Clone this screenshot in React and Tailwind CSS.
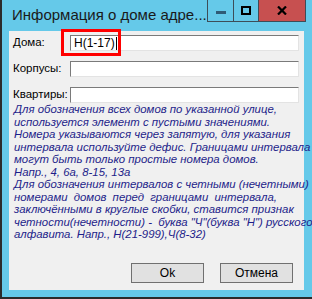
import React from 'react';

const hintLines = [
  { t: 'Для обозначения всех домов по указанной улице,' },
  { t: 'используется элемент с пустыми значениями.' },
  { t: 'Номера указываются через запятую, для указания' },
  { t: 'интервала используйте дефис. Границами интервала', full: true },
  { t: 'могут быть только простые номера домов.' },
  { t: 'Напр., 4, 6а, 8-15, 13а' },
  { t: 'Для обозначения интервалов с четными (нечетными)' },
  { t: 'номерами домов перед границами интервала,', wide: true },
  { t: 'заключёнными в круглые скобки, ставится признак' },
  { t: 'четности(нечетности) -  буква "Ч"(буква "Н") русского' },
  { t: 'алфавита. Напр., Н(21-999),Ч(8-32)' },
];

const Field = ({ label, value, caret }) => (
  <div className="flex items-center h-[16px]">
    <span className="w-[61px] pl-[4px] text-[11.5px] leading-none text-black whitespace-nowrap">{label}</span>
    <div className="w-[229px] h-[16px] bg-white border border-[#7a7a7a] border-b-[#e3e3e3] border-r-[#e3e3e3] flex items-center pl-[3px] text-[12px] text-black">
      {value}
      {caret && <span className="w-px h-[13px] bg-black ml-px" />}
    </div>
  </div>
);

const Btn = ({ children }) => (
  <button className="w-[73px] h-[20px] bg-[#e1e1e1] border border-[#707070] text-[12px] text-black leading-none">
    {children}
  </button>
);

const App = () => {
  return (
    <div
      className="w-[312px] h-[299px] bg-[#65c9e9] border-l-2 border-b-2 border-[#2b2b2b] flex flex-col overflow-hidden"
      style={{ fontFamily: '"Liberation Sans", Arial, sans-serif' }}
    >
      <header className="h-[31px] flex items-start">
        <div className="flex-1 pl-[10px] pt-[6px] text-[15px] leading-[18px] text-[#1a1a1a] whitespace-nowrap">
          Информация о доме адре...
        </div>
        <div className="flex h-[22px] mr-[6px] border border-t-0 border-[#3d4d58]">
          <div className="w-[26px] flex items-center justify-center border-r border-[#3d4d58]">
            <div className="w-[10px] h-[3px] bg-[#2f5b76] mt-[3px]" />
          </div>
          <div className="w-[25px] flex items-center justify-center border-r border-[#3d4d58]">
            <div className="w-[10px] h-[9px] border-2 border-black" />
          </div>
          <div className="w-[46px] bg-[#c75050] flex items-center justify-center">
            <svg width="10" height="9" viewBox="0 0 10 9">
              <path d="M1 0.5 L9 8.5 M9 0.5 L1 8.5" stroke="#000" strokeWidth="2.2" />
            </svg>
          </div>
        </div>
      </header>

      <main className="relative ml-[7px] w-[295px] h-[259px] bg-[#f0f0f0] pt-[4px] flex flex-col">
        <div className="flex flex-col gap-[10px]">
          <Field label="Дома:" value="Н(1-17)" caret />
          <Field label="Корпусы:" value="" />
          <Field label="Квартиры:" value="" />
        </div>

        <div className="absolute left-[52px] top-[-2px] w-[60px] h-[27px] border-[3px] border-[#ff0000]" />

        <div className="pl-[5px] w-[291px] text-[11.4px] italic leading-[12.5px] text-[#1e1e8a]">
          {hintLines.map((l, i) =>
            l.full ? (
              <div key={i} className="whitespace-nowrap text-justify [text-align-last:justify]">{l.t}</div>
            ) : (
              <div key={i} className={l.wide ? 'whitespace-pre [word-spacing:3px]' : 'whitespace-pre'}>{l.t}</div>
            )
          )}
        </div>

        <div className="mt-auto mb-[7px] flex gap-[16px] pl-[122px]">
          <Btn>Ok</Btn>
          <Btn>Отмена</Btn>
        </div>
      </main>
    </div>
  );
};

export default App;
